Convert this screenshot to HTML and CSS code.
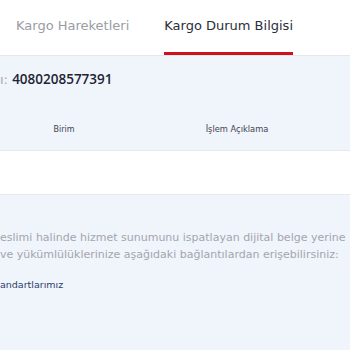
FILE: index.html
```html
<!DOCTYPE html>
<html lang="tr">
<head>
<meta charset="utf-8">
<link rel="stylesheet" href="styles.css">
</head>
<body>
<div class="page">
  <nav class="tabs">
    <div class="tab">Kargo Hareketleri</div>
    <div class="tab active">Kargo Durum Bilgisi</div>
  </nav>
  <main class="main">
    <div class="tracking"><span class="label">ı:</span> <span class="number">4080208577391</span></div>
    <div class="thead">
      <div class="th th-unit">Birim</div>
      <div class="th th-desc">İşlem Açıklama</div>
    </div>
    <div class="tbody"></div>
    <div class="info">
      <p class="line">eslimi halinde hizmet sunumunu ispatlayan dijital belge yerine</p>
      <p class="line">ve yükümlülüklerinize aşağıdaki bağlantılardan erişebilirsiniz:</p>
      <a class="link">andartlarımız</a>
    </div>
  </main>
</div>
</body>
</html>
```
FILE: styles.css
```css
html, body {
  margin: 0;
  padding: 0;
  width: 350px;
  height: 350px;
  overflow: hidden;
  background: #f0f4fb;
  font-family: "DejaVu Sans", "Noto Sans", sans-serif;
}
.page {
  display: flex;
  flex-direction: column;
  height: 350px;
}
.tabs {
  display: flex;
  height: 56px;
  background: #fff;
  border-bottom: 1px solid #e4e7ee;
  box-sizing: border-box;
  padding-left: 16px;
  gap: 35px;
}
.tab {
  font-size: 13px;
  color: #9a9ca4;
  padding-top: 18px;
  box-sizing: border-box;
  height: 55px;
  white-space: nowrap;
}
.tab.active {
  color: #2a2e3a;
  border-bottom: 3px solid #d0101c;
}
.main {
  flex: 1;
  display: flex;
  flex-direction: column;
}
.tracking {
  padding-top: 14px;
  height: 30px;
  font-size: 13px;
  white-space: nowrap;
}
.label {
  color: #a5a8b0;
}
.number {
  font-family: "Open Sans", "DejaVu Sans", sans-serif;
  font-size: 13.5px;
  color: #1e2433;
  font-weight: 600;
}
.thead {
  display: flex;
  height: 51px;
  border-bottom: 1px solid #e6e9f0;
  align-items: center;
  padding-top: 8px;
  box-sizing: border-box;
  font-size: 8px;
  color: #3e4350;
}
.th-unit {
  width: 128px;
  text-align: center;
}
.th-desc {
  width: 218px;
  text-align: center;
  font-size: 8.3px;
}
.tbody {
  height: 43px;
  background: #fff;
  border-bottom: 1px solid #e6e8ef;
}
.info {
  padding-top: 34px;
  white-space: nowrap;
}
.line {
  margin: 0;
  font-size: 11px;
  line-height: 17px;
  color: #a3a6ae;
}
.link {
  display: block;
  margin-top: 16px;
  font-size: 9.5px;
  color: #2c3d6e;
}
```
